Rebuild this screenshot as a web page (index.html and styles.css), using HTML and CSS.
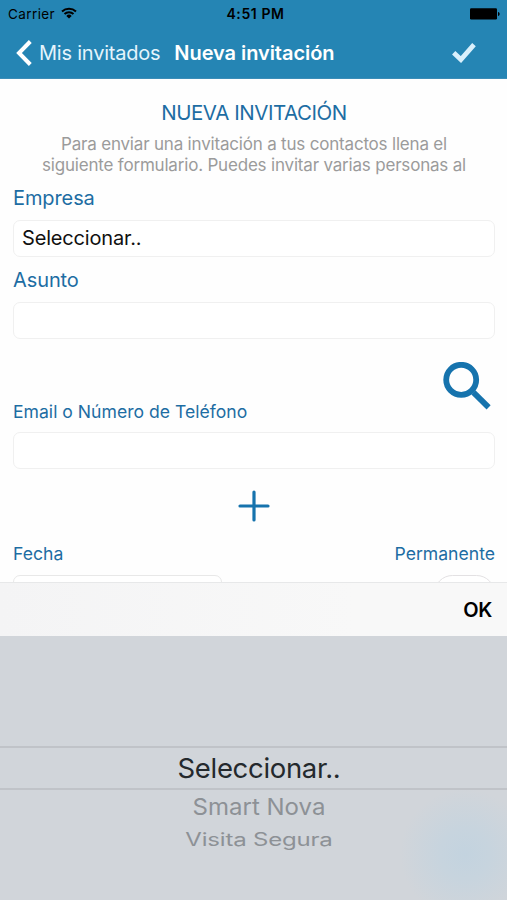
FILE: index.html
```html
<!DOCTYPE html>
<html lang="es">
  <head>
    <meta charset="UTF-8">
    <title>Nueva invitación</title>
    <link rel="stylesheet" href="styles.css">
  </head>
  <body>
    <header class="header">
      <div class="status-bar">
        <div class="carrier">
          <span>Carrier</span>
          <svg class="wifi" viewBox="0 0 16 12" width="16" height="12">
            <path d="M1 4.4a10.4 10.4 0 0 1 14 0M3.5 7.1a6.6 6.6 0 0 1 9 0" fill="none" stroke="#000" stroke-width="2"/>
            <path d="M8 11.6 5.3 8.9a3.9 3.9 0 0 1 5.4 0z"/>
          </svg>
        </div>
        <span class="time">4:51 PM</span>
        <svg class="battery" viewBox="0 0 30 12" width="30" height="12">
          <rect x="0" y="0.3" width="27" height="11.2" rx="1.2"/>
          <path d="M28 4c2.2.5 2.2 3.5 0 4z"/>
        </svg>
      </div>
      <nav class="nav-bar">
        <svg class="back-icon" viewBox="0 0 17 26" width="17" height="26">
          <path d="M15.3 1.5 4 13l11.3 11.5" fill="none" stroke="#fff" stroke-width="4"/>
        </svg>
        <span class="back-text">Mis invitados</span>
        <h1 class="nav-title">Nueva invitación</h1>
        <svg class="check-icon" viewBox="0 0 24 20" width="24" height="20">
          <path d="m1.7 9.8 7.2 6.8L22 1.7" fill="none" stroke="#d9f0fc" stroke-width="4.8"/>
        </svg>
      </nav>
    </header>

    <main class="form">
      <h2 class="form-title">NUEVA INVITACIÓN</h2>
      <p class="description">Para enviar una invitación a tus contactos llena el<br>siguiente formulario. Puedes invitar varias personas al</p>

      <div class="label label-empresa">Empresa</div>
      <div class="field">Seleccionar..</div>
      <div class="label label-asunto">Asunto</div>
      <div class="field"></div>

      <div class="contact-row">
        <span class="label-small">Email o Número de Teléfono</span>
        <svg class="search-icon" viewBox="0 0 48 48" width="48" height="48">
          <circle cx="18.2" cy="17.8" r="15" fill="none" stroke="#1673ad" stroke-width="5.8"/>
          <path d="m30.4 30.4 15.2 15" stroke="#1673ad" stroke-width="5.8"/>
        </svg>
      </div>
      <div class="field"></div>

      <div class="add-row">
        <svg viewBox="0 0 32 32" width="32" height="32">
          <path d="M2 16h28M16 2v28" stroke="#1673ad" stroke-width="3.2" stroke-linecap="round"/>
        </svg>
      </div>

      <div class="date-row">
        <span class="label-small">Fecha</span>
        <span class="label-small">Permanente</span>
      </div>
      <div class="date-fields">
        <div class="field date-field"></div>
        <div class="switch"></div>
      </div>
    </main>

    <div class="toolbar">
      <span class="ok">OK</span>
    </div>
    <div class="picker">
      <div class="picker-selected">Seleccionar..</div>
      <div class="picker-option option-smart"><span>Smart Nova</span></div>
      <div class="picker-option option-visita"><span>Visita Segura</span></div>
    </div>
  </body>
</html>
```

FILE: styles.css
```css
* {
  box-sizing: border-box;
}
body {
  font-family: Inter, "Liberation Sans", sans-serif;
  background-color: #fefefe;
  margin: 0;
  width: 507px;
  height: 900px;
  overflow: hidden;
  display: flex;
  flex-direction: column;
  white-space: nowrap;
}
svg {
  display: block;
  flex: none;
}

/* Header */
.header {
  height: 79px;
  flex: none;
  background-color: #2585b4;
  border-bottom: 1px solid #3b8db8;
}
.status-bar {
  display: grid;
  grid-template-columns: 1fr auto 1fr;
  align-items: center;
  height: 27px;
  padding: 0 7px 0 8px;
  font-size: 13.5px;
}
.carrier {
  display: flex;
  align-items: center;
  gap: 6px;
}
.carrier span {
  letter-spacing: 0.4px;
}
.wifi {
  margin-bottom: 2px;
}
.time {
  font-weight: 600;
  font-size: 14px;
  letter-spacing: 0.6px;
  padding-left: 3px;
}
.battery {
  justify-self: end;
}
.nav-bar {
  display: flex;
  align-items: center;
  height: 51px;
  padding: 0 31px 0 15px;
  color: #fff;
  font-size: 20px;
}
.back-text {
  margin-left: 7px;
  color: #e4f4fc;
  letter-spacing: -0.22px;
}
.nav-title {
  margin: 0 0 0 14px;
  font-size: 20px;
  font-weight: 600;
  letter-spacing: -0.06px;
}
.check-icon {
  margin-left: auto;
}

/* Form */
.form {
  height: 503px;
  flex: none;
  overflow: hidden;
  padding: 0 12px 0 13px;
  color: #1d6da3;
}
.form-title {
  margin: 20px 0 0;
  height: 27px;
  line-height: 27px;
  font-size: 20.5px;
  font-weight: 400;
  letter-spacing: -0.45px;
  text-align: center;
}
.description {
  margin: 8px 0 0;
  height: 41px;
  line-height: 20.5px;
  font-size: 17px;
  letter-spacing: -0.19px;
  text-align: center;
  color: #9b9b9b;
}
.label {
  height: 24px;
  line-height: 24px;
  font-size: 20px;
  letter-spacing: -0.1px;
}
.label-empresa {
  margin: 11px 0 10px;
}
.label-asunto {
  margin: 11px 0 10px;
}
.label-small {
  line-height: 22px;
  font-size: 17.6px;
}
.field {
  height: 37px;
  border: 1.5px solid #f0f0f0;
  border-radius: 7px;
  line-height: 34px;
  padding-left: 8px;
  font-size: 20px;
  letter-spacing: -0.17px;
  color: #111;
  background-color: #fff;
}
.contact-row {
  display: flex;
  justify-content: space-between;
  align-items: flex-end;
  height: 93px;
  padding-bottom: 9px;
}
.search-icon {
  margin: 0 4px 13px 0;
}
.add-row {
  display: flex;
  justify-content: center;
  align-items: center;
  height: 73px;
}
.date-row {
  display: flex;
  justify-content: space-between;
  height: 32px;
  margin-top: 1px;
}
.date-fields {
  display: flex;
  justify-content: space-between;
}
.date-field {
  width: 209px;
  border-color: #e8e8e8;
}
.switch {
  width: 61px;
  height: 37px;
  border: 1.5px solid #e3e1e3;
  border-radius: 19px;
  background-color: #fff;
}

/* Picker */
.toolbar {
  display: flex;
  align-items: center;
  justify-content: flex-end;
  height: 54px;
  flex: none;
  padding-right: 15px;
  border-top: 1px solid #e7e8e9;
  background: linear-gradient(90deg, #f4f4f5 0%, #f8f8f8 70%);
  font-size: 20px;
  font-weight: 600;
  letter-spacing: -0.3px;
  color: #000;
}
.picker {
  flex: 1;
  padding-top: 110px;
  background: radial-gradient(circle at 465px 218px, #c3d3df 0, #c7d4de 25px, #d1d5da 65px);
  text-align: center;
}
.picker-selected {
  height: 44px;
  border: solid #c0c3c8;
  border-width: 2px 0;
  line-height: 41px;
  padding-left: 11px;
  font-size: 27.5px;
  letter-spacing: -0.32px;
  color: #24292d;
}
.picker-option {
  padding-left: 11px;
  font-size: 24px;
  color: #8d9196;
}
.picker-option span {
  display: inline-block;
}
.option-smart {
  height: 33px;
  line-height: 33px;
}
.option-visita {
  height: 34px;
  line-height: 34px;
  letter-spacing: -0.2px;
}
.option-smart span {
  transform: scaleY(0.95);
}
.option-visita span {
  transform: scaleY(0.75);
}
```
